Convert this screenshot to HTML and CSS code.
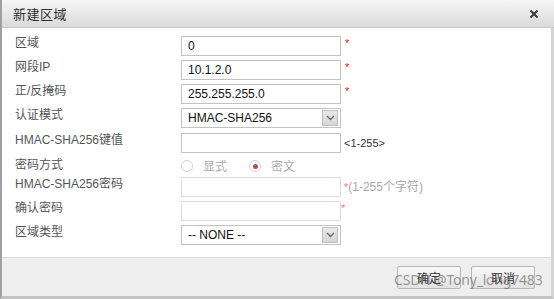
FILE: index.html
```html
<!DOCTYPE html>
<html lang="zh-CN">
<head>
    <meta charset="UTF-8">
    <title>新建区域</title>
    <link rel="stylesheet" href="styles.css">
</head>
<body>
    <div class="dialog">
        <div class="titlebar">
            <span class="title">新建区域</span>
            <span class="close">
                <svg width="10" height="10" viewBox="0 0 10 10"><path d="M1.5 1.5 L8.5 8.5 M8.5 1.5 L1.5 8.5" stroke="#3a3a3a" stroke-width="2"/></svg>
            </span>
        </div>

        <div class="form">
            <div class="row">
                <label>区域</label>
                <input class="field" type="text" value="0">
                <span class="req">*</span>
            </div>
            <div class="row">
                <label>网段IP</label>
                <input class="field" type="text" value="10.1.2.0">
                <span class="req">*</span>
            </div>
            <div class="row">
                <label>正/反掩码</label>
                <input class="field" type="text" value="255.255.255.0">
                <span class="req">*</span>
            </div>
            <div class="row">
                <label>认证模式</label>
                <div class="select"><span>HMAC-SHA256</span><i class="arrow"><svg width="9" height="6" viewBox="0 0 9 6"><path d="M1 1 L4.5 4.5 L8 1" stroke="#666" stroke-width="1.3" fill="none"/></svg></i></div>
            </div>
            <div class="row row-key">
                <label>HMAC-SHA256键值</label>
                <input class="field" type="text" value="">
                <span class="hint">&lt;1-255&gt;</span>
            </div>
            <div class="row row-radio">
                <label>密码方式</label>
                <div class="radios">
                    <span class="radio"><i class="dot"></i>显式</span>
                    <span class="radio"><i class="dot on"></i>密文</span>
                </div>
            </div>
            <div class="row">
                <label>HMAC-SHA256密码</label>
                <input class="field off" type="text" value="" disabled>
                <span class="hint"><span class="req off">*</span><span class="muted">(1-255个字符)</span></span>
            </div>
            <div class="row">
                <label>确认密码</label>
                <input class="field off" type="text" value="" disabled>
                <span class="req off">*</span>
            </div>
            <div class="row">
                <label>区域类型</label>
                <div class="select"><span>-- NONE --</span><i class="arrow"><svg width="9" height="6" viewBox="0 0 9 6"><path d="M1 1 L4.5 4.5 L8 1" stroke="#666" stroke-width="1.3" fill="none"/></svg></i></div>
            </div>
        </div>

        <div class="footer">
            <button class="btn">确定</button>
            <button class="btn">取消</button>
            <span class="watermark">CSDN @Tony_long7483</span>
        </div>
    </div>
</body>
</html>
```

FILE: styles.css
```css
html, body {
    margin: 0;
    padding: 0;
    background-color: #fff;
}
body {
    font-family: Arial, "Liberation Sans", "Noto Sans CJK SC", sans-serif;
    font-size: 12px;
    color: #444;
}
.dialog {
    width: 549px;
    height: 296px;
    border-left: 2px solid #a0a0a0;
    border-right: 3px solid #d4d4d4;
    border-bottom: 3px solid #c4c4c4;
    display: flex;
    flex-direction: column;
    position: relative;
}
.titlebar {
    height: 27px;
    border-bottom: 1px solid #c8c8c8;
    background: linear-gradient(#f6f6f6, #dadada);
    display: flex;
    align-items: center;
    justify-content: space-between;
    padding: 0 15px 0 11px;
    margin-right: -3px;
}
.title {
    font-family: "Noto Sans CJK SC", sans-serif;
    font-size: 13px;
    color: #2e2e2e;
    letter-spacing: 0.5px;
}
.close {
    display: flex;
}
.form {
    flex: 1;
    padding: 8px 0 0 13px;
}
.row {
    display: grid;
    grid-template-columns: 166px 160px auto;
    align-items: start;
    height: 24px;
}
.row-key {
    height: 25px;
    margin-top: 1px;
}
.row-radio {
    height: 19px;
}
.row label {
    font-family: Arial, "Liberation Sans", "Noto Sans CJK SC", sans-serif;
    font-size: 12px;
    line-height: 14px;
    color: #555;
}
.field {
    box-sizing: border-box;
    width: 160px;
    height: 20px;
    margin: 0;
    border: 1px solid #c2c2c2;
    padding: 0 6px;
    font-family: Arial, "Liberation Sans", sans-serif;
    font-size: 12px;
    color: #111;
    background-color: #fff;
    outline: none;
}
.field.off {
    border-color: #dedede;
}
.req {
    color: #e02020;
    font-size: 11px;
    padding-left: 4px;
    line-height: 14px;
}
.req.off {
    color: #f08080;
    padding-left: 0;
}
.hint {
    font-size: 11px;
    color: #333;
    padding-left: 3px;
    line-height: 20px;
}
.hint .muted {
    color: #a8a8a8;
    font-size: 12px;
}
.select {
    box-sizing: border-box;
    width: 160px;
    height: 20px;
    border: 1px solid #c2c2c2;
    display: flex;
    align-items: center;
    justify-content: space-between;
    padding: 0 2px 0 6px;
    font-size: 12px;
    color: #111;
}
.arrow {
    box-sizing: border-box;
    width: 16px;
    height: 16px;
    border: 1px solid #c0c0c0;
    background: linear-gradient(#e8e8e8, #d6d6d6);
    display: flex;
    align-items: center;
    justify-content: center;
}
.radios {
    display: flex;
    gap: 22px;
    font-family: "Noto Sans CJK SC", sans-serif;
    font-size: 12px;
    color: #aaa;
    padding-top: 1px;
}
.radio {
    display: flex;
    align-items: center;
    gap: 10px;
    line-height: 14px;
}
.dot {
    box-sizing: border-box;
    width: 12px;
    height: 12px;
    border: 1px solid #d4d4d4;
    border-radius: 50%;
    display: flex;
    align-items: center;
    justify-content: center;
}
.dot.on::after {
    content: "";
    width: 5px;
    height: 5px;
    border-radius: 50%;
    background-color: #c84848;
}
.footer {
    height: 39px;
    border-top: 1px solid #dcdcdc;
    background-color: #eeeeee;
    display: flex;
    justify-content: flex-end;
    align-items: flex-start;
    gap: 10px;
    padding: 8px 16px 0 0;
    box-sizing: border-box;
    position: relative;
}
.btn {
    width: 64px;
    height: 23px;
    border: 1px solid #b8b8b8;
    border-radius: 2px;
    background: linear-gradient(#f8f8f8, #e2e2e2);
    font-family: "Noto Sans CJK SC", sans-serif;
    font-size: 12px;
    color: #333;
    padding: 0;
}
.watermark {
    position: absolute;
    left: 392px;
    top: 12px;
    font-family: "Noto Sans", "DejaVu Sans", sans-serif;
    font-size: 14px;
    color: rgba(90, 90, 90, 0.6);
    white-space: nowrap;
    letter-spacing: -0.2px;
}
```
